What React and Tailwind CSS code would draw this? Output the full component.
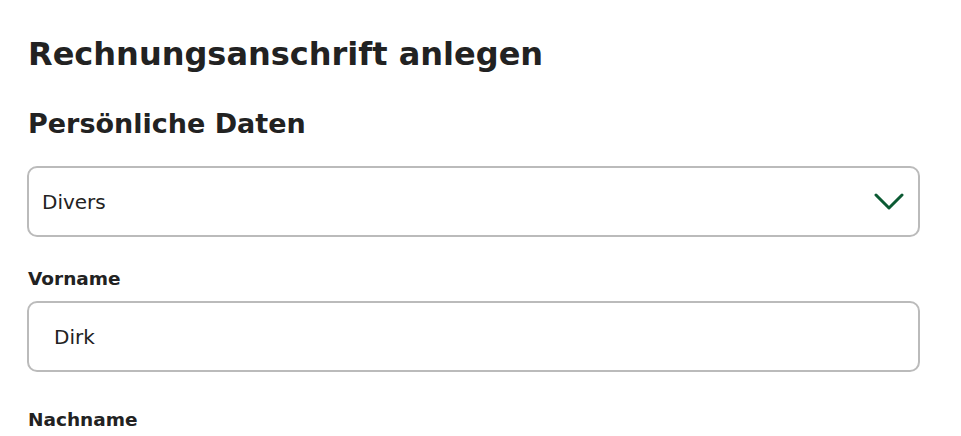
import React from 'react';

const App = () => {
    return (
        <div className="min-h-screen bg-white text-[#222222] pl-[27px] pr-[41px] pt-[34px] font-['DejaVu_Sans',sans-serif]">
            <h1 className="pl-px text-[32px] font-bold leading-[40px]">Rechnungsanschrift anlegen</h1>

            <h2 className="pl-px mt-[32px] text-[27px] font-bold leading-[36px]">Persönliche Daten</h2>

            {/* Anrede */}
            <div className="mt-[24px] h-[71px] rounded-[10px] border-2 border-[#bbbbbb] flex items-center justify-between pl-[13px] pr-[14px]">
                <span className="text-[20px] leading-[24px]">Divers</span>
                <svg width="30" height="18" viewBox="0 0 30 18" fill="none" stroke="#0b5a33" strokeWidth="3" strokeLinecap="round" strokeLinejoin="round">
                    <path d="M2 2l13 13L28 2" />
                </svg>
            </div>

            {/* Vorname */}
            <label className="block pl-px mt-[30px] text-[18.5px] font-bold leading-[24px]">Vorname</label>
            <div className="mt-[10px] h-[71px] rounded-[10px] border-2 border-[#bbbbbb] flex items-center pl-[25px]">
                <span className="text-[20px] leading-[24px]">Dirk</span>
            </div>

            {/* Nachname */}
            <label className="block pl-px mt-[36px] text-[18.5px] font-bold leading-[24px]">Nachname</label>
        </div>
    );
};

export default App;
